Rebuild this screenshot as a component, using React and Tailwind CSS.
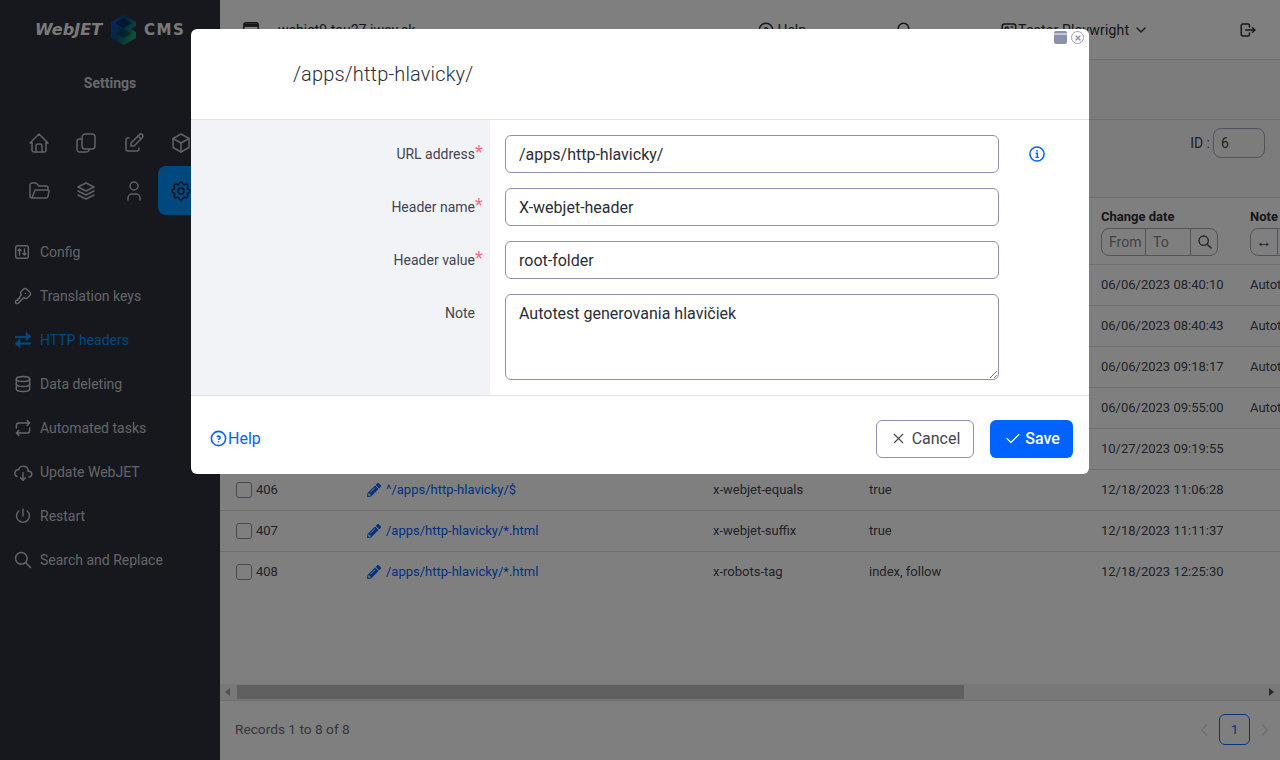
import React from 'react';
import {
    TbHome, TbEdit, TbBox, TbFolderOpen, TbStack2, TbUser, TbSettings,
    TbKey, TbDatabase, TbRepeat, TbCloudDownload, TbPower, TbSearch,
    TbLogout, TbHelpCircle, TbX, TbCheck, TbChevronDown, TbChevronLeft, TbChevronRight, TbId,
} from 'react-icons/tb';
import { FaPencilAlt } from 'react-icons/fa';

const ConfigIcon = ({ className }) => (
    <svg className={className} viewBox="0 0 20 20" fill="none" stroke="currentColor" strokeWidth="1.4" strokeLinecap="round" strokeLinejoin="round">
        <rect x="2.7" y="3.7" width="12.6" height="12.6" rx="2" />
        <path d="M6.5 13V7M5 8.5L6.5 7 8 8.5M11.5 7v6M10 11.5l1.5 1.5 1.5-1.5" />
    </svg>
);

const CopyIcon = ({ className }) => (
    <svg className={className} viewBox="0 0 24 24" fill="none" stroke="currentColor" strokeWidth="1.5" strokeLinecap="round" strokeLinejoin="round">
        <path d="M11.5 3h6.5a3 3 0 0 1 3 3v9a3 3 0 0 1-3 3h-7a3 3 0 0 1-3-3V6.5A3.5 3.5 0 0 1 11.5 3z" />
        <path d="M8 8H5.5A2.5 2.5 0 0 0 3 10.500V18.500A2.500 2.500 0 0 0 5.500 21h7a2.500 2.500 0 0 0 2.500-2.500V18" />
    </svg>
);

const SwapIcon = ({ className }) => (
    <svg className={className} viewBox="0 0 20 20" fill="none" stroke="currentColor" strokeWidth="2.2" strokeLinejoin="round">
        <path d="M2 7h12" />
        <path d="M13 2.800L18 7l-5 4.200z" fill="currentColor" strokeWidth="0.6" transform="translate(0 -0.500) scale(1 1)" />
        <path d="M18 13.500H6" />
        <path d="M7 9.300L2 13.500l5 4.200z" fill="currentColor" strokeWidth="0.6" />
    </svg>
);

const BrowserIcon = ({ className }) => (
    <svg className={className} viewBox="0 0 16 16" fill="none" stroke="currentColor" strokeWidth="1.5">
        <rect x="0.8" y="0.8" width="14.4" height="14.4" rx="2.2" />
        <path d="M1 3.2h14" strokeWidth="3.4" />
    </svg>
);

const WindowBarIcon = ({ className }) => (
    <svg className={className} viewBox="0 0 13 13" fill="currentColor">
        <path d="M2 0h9a2 2 0 0 1 2 2v.6H0V2a2 2 0 0 1 2-2zM0 3.6h13V11a2 2 0 0 1-2 2H2a2 2 0 0 1-2-2z" />
    </svg>
);

const InfoIcon = ({ className }) => (
    <svg className={className} viewBox="0 0 16 16" fill="none" stroke="currentColor">
        <circle cx="8" cy="8" r="7.1" strokeWidth="1.5" />
        <path d="M6.6 7.2H8.3V11.2M6.4 11.4h3.4" strokeWidth="1.4" />
        <circle cx="8" cy="4.8" r="0.9" fill="currentColor" stroke="none" />
    </svg>
);

const CubeLogo = () => (
    <svg className="w-[25px] h-[30px] mx-2" viewBox="0 0 25 30">
        <defs>
            <linearGradient id="cubeGrad" x1="0" y1="0" x2="1" y2="0.6">
                <stop offset="0" stopColor="#1450d0" />
                <stop offset="0.5" stopColor="#0a4a80" />
                <stop offset="1" stopColor="#1fa070" />
            </linearGradient>
        </defs>
        <polygon points="12.5,0 25,7 25,11 20,14 25,17 25,23 12.5,30 0,23 0,7" fill="url(#cubeGrad)" />
        <polygon points="12.5,3 21,8 12.5,13 4,8" fill="#0a2a5c" opacity="0.75" />
        <polygon points="12.5,14 20,18.5 12.5,23 5,18.5" fill="#0a3a50" opacity="0.7" />
    </svg>
);

const gridIcons = [TbHome, CopyIcon, TbEdit, TbBox, TbFolderOpen, TbStack2, TbUser, TbSettings];

const menu = [
    { label: 'Config', icon: ConfigIcon },
    { label: 'Translation keys', icon: TbKey },
    { label: 'HTTP headers', icon: SwapIcon, active: true },
    { label: 'Data deleting', icon: TbDatabase },
    { label: 'Automated tasks', icon: TbRepeat },
    { label: 'Update WebJET', icon: TbCloudDownload },
    { label: 'Restart', icon: TbPower },
    { label: 'Search and Replace', icon: TbSearch },
];

const rows = [
    { id: 6, url: '/apps/http-hlavicky/', name: 'X-webjet-header', value: 'root-folder', date: '06/06/2023 08:40:10', note: 'Autotest generovania hlavičiek' },
    { id: 7, date: '06/06/2023 08:40:43', note: 'Autotest generovania hlavičiek' },
    { id: 8, date: '06/06/2023 09:18:17', note: 'Autotest generovania hlavičiek' },
    { id: 9, date: '06/06/2023 09:55:00', note: 'Autotest generovania hlavičiek' },
    { id: 405, date: '10/27/2023 09:19:55' },
    { id: 406, url: '^/apps/http-hlavicky/$', name: 'x-webjet-equals', value: 'true', date: '12/18/2023 11:06:28' },
    { id: 407, url: '/apps/http-hlavicky/*.html', name: 'x-webjet-suffix', value: 'true', date: '12/18/2023 11:11:37' },
    { id: 408, url: '/apps/http-hlavicky/*.html', name: 'x-robots-tag', value: 'index, follow', date: '12/18/2023 12:25:30' },
];

function Sidebar() {
    return (
        <aside className="w-[220px] shrink-0 bg-[#2d303b] flex flex-col">
            <div className="h-[60px] flex items-center pl-[35px] text-[#f4f4f4]">
                <span className="font-['DejaVu_Sans',sans-serif] italic font-bold text-[16px] w-[68px] tracking-[0.1px]">WebJET</span>
                <CubeLogo />
                <span className="font-['DejaVu_Sans',sans-serif] font-bold text-[15px] tracking-[1.5px]">CMS</span>
            </div>
            <div className="h-[46px] flex items-center justify-center text-sm font-bold text-[#cdd0d8]">Settings</div>
            <div className="grid grid-cols-[repeat(4,47.5px)] auto-rows-[48px] ml-[15px] mt-3 mb-[16px]">
                {gridIcons.map((Icon, i) => (
                    <div key={i} className={`h-[49px] flex items-center justify-center rounded-lg ${i === 7 ? 'bg-[#0092ff] text-[#13233a]' : 'text-[#c0c2c8]'}`}>
                        <Icon className="w-6 h-6" strokeWidth={1.5} />
                    </div>
                ))}
            </div>
            {menu.map(({ label, icon: Icon, active }) => (
                <div key={label} className={`h-11 flex items-center pl-[13px] text-sm ${active ? 'text-[#0092ff]' : 'text-[#c8cad0]'}`}>
                    <Icon className="w-5 h-5 mr-[7px]" strokeWidth={1.75} />
                    {label}
                </div>
            ))}
        </aside>
    );
}

function Topbar() {
    return (
        <header className="h-[60px] shrink-0 bg-white border-b border-[#dddfe4] flex items-center text-sm text-[#2b2e36]">
            <BrowserIcon className="w-4 h-4 ml-[23px] mr-[19px]" />
            <span>webjet9.tau27.iway.sk</span>
            <TbHelpCircle className="w-[18px] h-[18px] ml-[342px] mr-[2px]" />
            <span>Help</span>
            <TbSearch className="w-[18px] h-[18px] ml-[90px]" />
            <TbId className="w-[18px] h-[18px] ml-[86px]" />
            <span className="tracking-[0.2px]">Tester Playwright</span>
            <TbChevronDown className="w-4 h-4 ml-1" />
            <TbLogout className="w-[18px] h-[18px] ml-auto mr-[23px]" />
        </header>
    );
}

function HeaderCell({ w, children, title }) {
    return (
        <div className={`${w} shrink-0`}>
            <div className="h-[17px] mt-[9px] mb-[4px] text-[13px] font-bold text-[#2b2e36] whitespace-nowrap">{title}</div>
            {children}
        </div>
    );
}

function Table() {
    return (
        <div className="flex-1 min-h-0 bg-white overflow-hidden text-[13px] text-[#43464f]">
            <div className="h-[67px] flex pl-4 border-b border-[#dddfe4] whitespace-nowrap">
                <HeaderCell w="w-[131px]" title="ID" />
                <HeaderCell w="w-[346px]" title="URL address" />
                <HeaderCell w="w-[156px]" title="Header name" />
                <HeaderCell w="w-[232px]" title="Header value" />
                <HeaderCell w="w-[149px]" title="Change date">
                    <div className="w-[117px] h-[28px] flex items-center border border-[#a3a9bd] rounded-lg text-[#80848f]">
                        <span className="w-[44px] h-full flex items-center pl-[7px] text-sm border-r border-[#a3a9bd]">From</span>
                        <span className="w-[45px] h-full flex items-center pl-[7px] text-sm border-r border-[#a3a9bd]">To</span>
                        <TbSearch className="w-4 h-4 ml-[6px] text-[#43464f]" />
                    </div>
                </HeaderCell>
                <HeaderCell w="w-[60px]" title="Note">
                    <div className="w-[60px] h-[28px] flex items-center border border-[#a3a9bd] rounded-lg">
                        <span className="w-[27px] h-full flex items-center justify-center text-base border-r border-[#a3a9bd]">↔</span>
                    </div>
                </HeaderCell>
            </div>
            {rows.map((r, i) => (
                <div key={r.id} className={`h-[41px] flex items-center pl-4 whitespace-nowrap border-b ${i < rows.length - 1 ? 'border-[#dddfe4]' : 'border-transparent'}`}>
                    <div className="w-[131px] shrink-0 flex items-center">
                        <span className="w-4 h-4 mr-1 border border-[#8d93a8] rounded-[3px]" />
                        {r.id}
                    </div>
                    <div className="w-[346px] shrink-0 flex items-center text-[#0063ff]">
                        <FaPencilAlt className="w-[14px] h-[14px] mr-[5px]" />
                        {r.url}
                    </div>
                    <div className="w-[156px] shrink-0">{r.name}</div>
                    <div className="w-[232px] shrink-0">{r.value}</div>
                    <div className="w-[149px] shrink-0">{r.date}</div>
                    <div className="w-[60px] shrink-0 overflow-hidden">{r.note}</div>
                </div>
            ))}
        </div>
    );
}

function Field({ label, value }) {
    return (
        <div className="flex items-start">
            <label className="w-[284px] h-[38px] flex items-center justify-end text-sm text-[#43464f]">
                {label}
                <span className="w-[9px] -mr-[9px] text-[#ff6b82] text-lg leading-none -mt-1">*</span>
            </label>
            <div className="w-[494px] h-[38px] ml-[30px] px-[13px] pt-px flex items-center border border-[#8a93ad] rounded-md text-base text-[#2b2e36]">{value}</div>
        </div>
    );
}

function Modal() {
    return (
        <div className="fixed inset-0 bg-black/50 flex justify-center items-start pt-[29px]">
            <div className="w-[898px] h-[445px] bg-white rounded-md flex flex-col relative">
                <div className="absolute top-[2px] right-[5px] flex items-center gap-[4px] text-[#8a90aa]">
                    <WindowBarIcon className="w-[13px] h-[13px]" />
                    <span className="w-[13px] h-[13px] rounded-full border-[1.5px] border-[#9a9fb3] flex items-center justify-center">
                        <TbX className="w-[8px] h-[8px]" strokeWidth={4} />
                    </span>
                </div>
                <div className="h-[91px] shrink-0 border-b border-[#dfe1e5] flex items-center pl-[102px] text-xl font-light tracking-[0.15px] text-[#2b2e36]">
                    /apps/http-hlavicky/
                </div>
                <div className="h-[276px] shrink-0 border-b border-[#dfe1e5] flex bg-[linear-gradient(to_right,#f2f3f6_299px,#ffffff_299px)]">
                    <div className="flex flex-col gap-[15px] pt-[15px]">
                        <Field label="URL address" value="/apps/http-hlavicky/" />
                        <Field label="Header name" value="X-webjet-header" />
                        <Field label="Header value" value="root-folder" />
                        <div className="flex items-start">
                            <label className="w-[284px] pt-[9px] text-right text-sm text-[#43464f]">Note</label>
                            <div className="w-[494px] h-[86px] ml-[30px] px-[13px] pt-[7px] border border-[#8a93ad] rounded-md text-base text-[#2b2e36] relative">
                                Autotest generovania hlavičiek
                                <svg className="absolute right-[1px] bottom-[1px] w-2 h-2 text-[#555]" viewBox="0 0 8 8" stroke="currentColor" strokeWidth="0.8"><path d="M8 1L1 8M8 5L5 8" /></svg>
                            </div>
                        </div>
                    </div>
                    <InfoIcon className="w-4 h-4 text-[#0063ff] ml-[30px] mt-[26px]" />
                </div>
                <div className="flex-1 flex items-center pl-[18px] pr-[16px] pt-[7px]">
                    <TbHelpCircle className="w-[19px] h-[19px] text-[#0063ff]" />
                    <span className="text-[#0063ff] text-base pt-px">Help</span>
                    <button className="ml-auto w-[98px] h-[38px] flex items-center justify-center border border-[#8a93ad] rounded-md text-base text-[#43464f]">
                        <TbX className="w-[17px] h-[17px] mr-[5px]" strokeWidth={1.5} />
                        Cancel
                    </button>
                    <button className="ml-4 w-[83px] h-[38px] flex items-center justify-center bg-[#0063ff] rounded-md text-base font-medium text-white">
                        <TbCheck className="w-[19px] h-[19px] mr-[3px]" strokeWidth={1.5} />
                        Save
                    </button>
                </div>
            </div>
        </div>
    );
}

export default function App() {
    return (
        <div className="flex h-screen w-full overflow-hidden font-['Roboto',sans-serif]">
            <Sidebar />
            <main className="flex-1 min-w-0 flex flex-col">
                <Topbar />
                <div className="h-[60px] shrink-0 bg-[#f8f8f9] border-b border-[#dddfe4]" />
                <div className="h-[78px] shrink-0 bg-[#f8f8f9] border-b border-[#dddfe4] flex justify-end items-start pt-2 pr-[15px] text-sm text-[#43464f]">
                    <span className="h-[30px] flex items-center mr-[3px]">ID :</span>
                    <span className="w-[52px] h-[30px] flex items-center pl-[7px] border border-[#a3a9bd] rounded-lg">6</span>
                </div>
                <Table />
                <div className="h-[17px] shrink-0 bg-[#f1f1f1] border-b border-[#dddfe4] flex items-center">
                    <span className="w-0 h-0 ml-[5px] mr-[7px] border-y-[4px] border-y-transparent border-r-[5px] border-r-[#a3a3a3]" />
                    <span className="w-[727px] h-[14px] bg-[#c1c1c1]" />
                    <span className="w-0 h-0 ml-auto mr-[6px] border-y-[4px] border-y-transparent border-l-[5px] border-l-[#505050]" />
                </div>
                <footer className="h-[59px] shrink-0 bg-white flex items-center pl-[15px] pb-[2px] text-[13.7px] text-[#6a6d78]">
                    Records 1 to 8 of 8
                    <TbChevronLeft className="w-5 h-5 ml-auto mr-[5px] text-[#e0e0e3]" />
                    <span className="w-[31px] h-[31px] flex items-center justify-center border border-[#0f6aff] rounded-md text-[#0f6aff]">1</span>
                    <TbChevronRight className="w-5 h-5 ml-[5px] mr-[5px] text-[#e0e0e3]" />
                </footer>
            </main>
            <Modal />
        </div>
    );
}
